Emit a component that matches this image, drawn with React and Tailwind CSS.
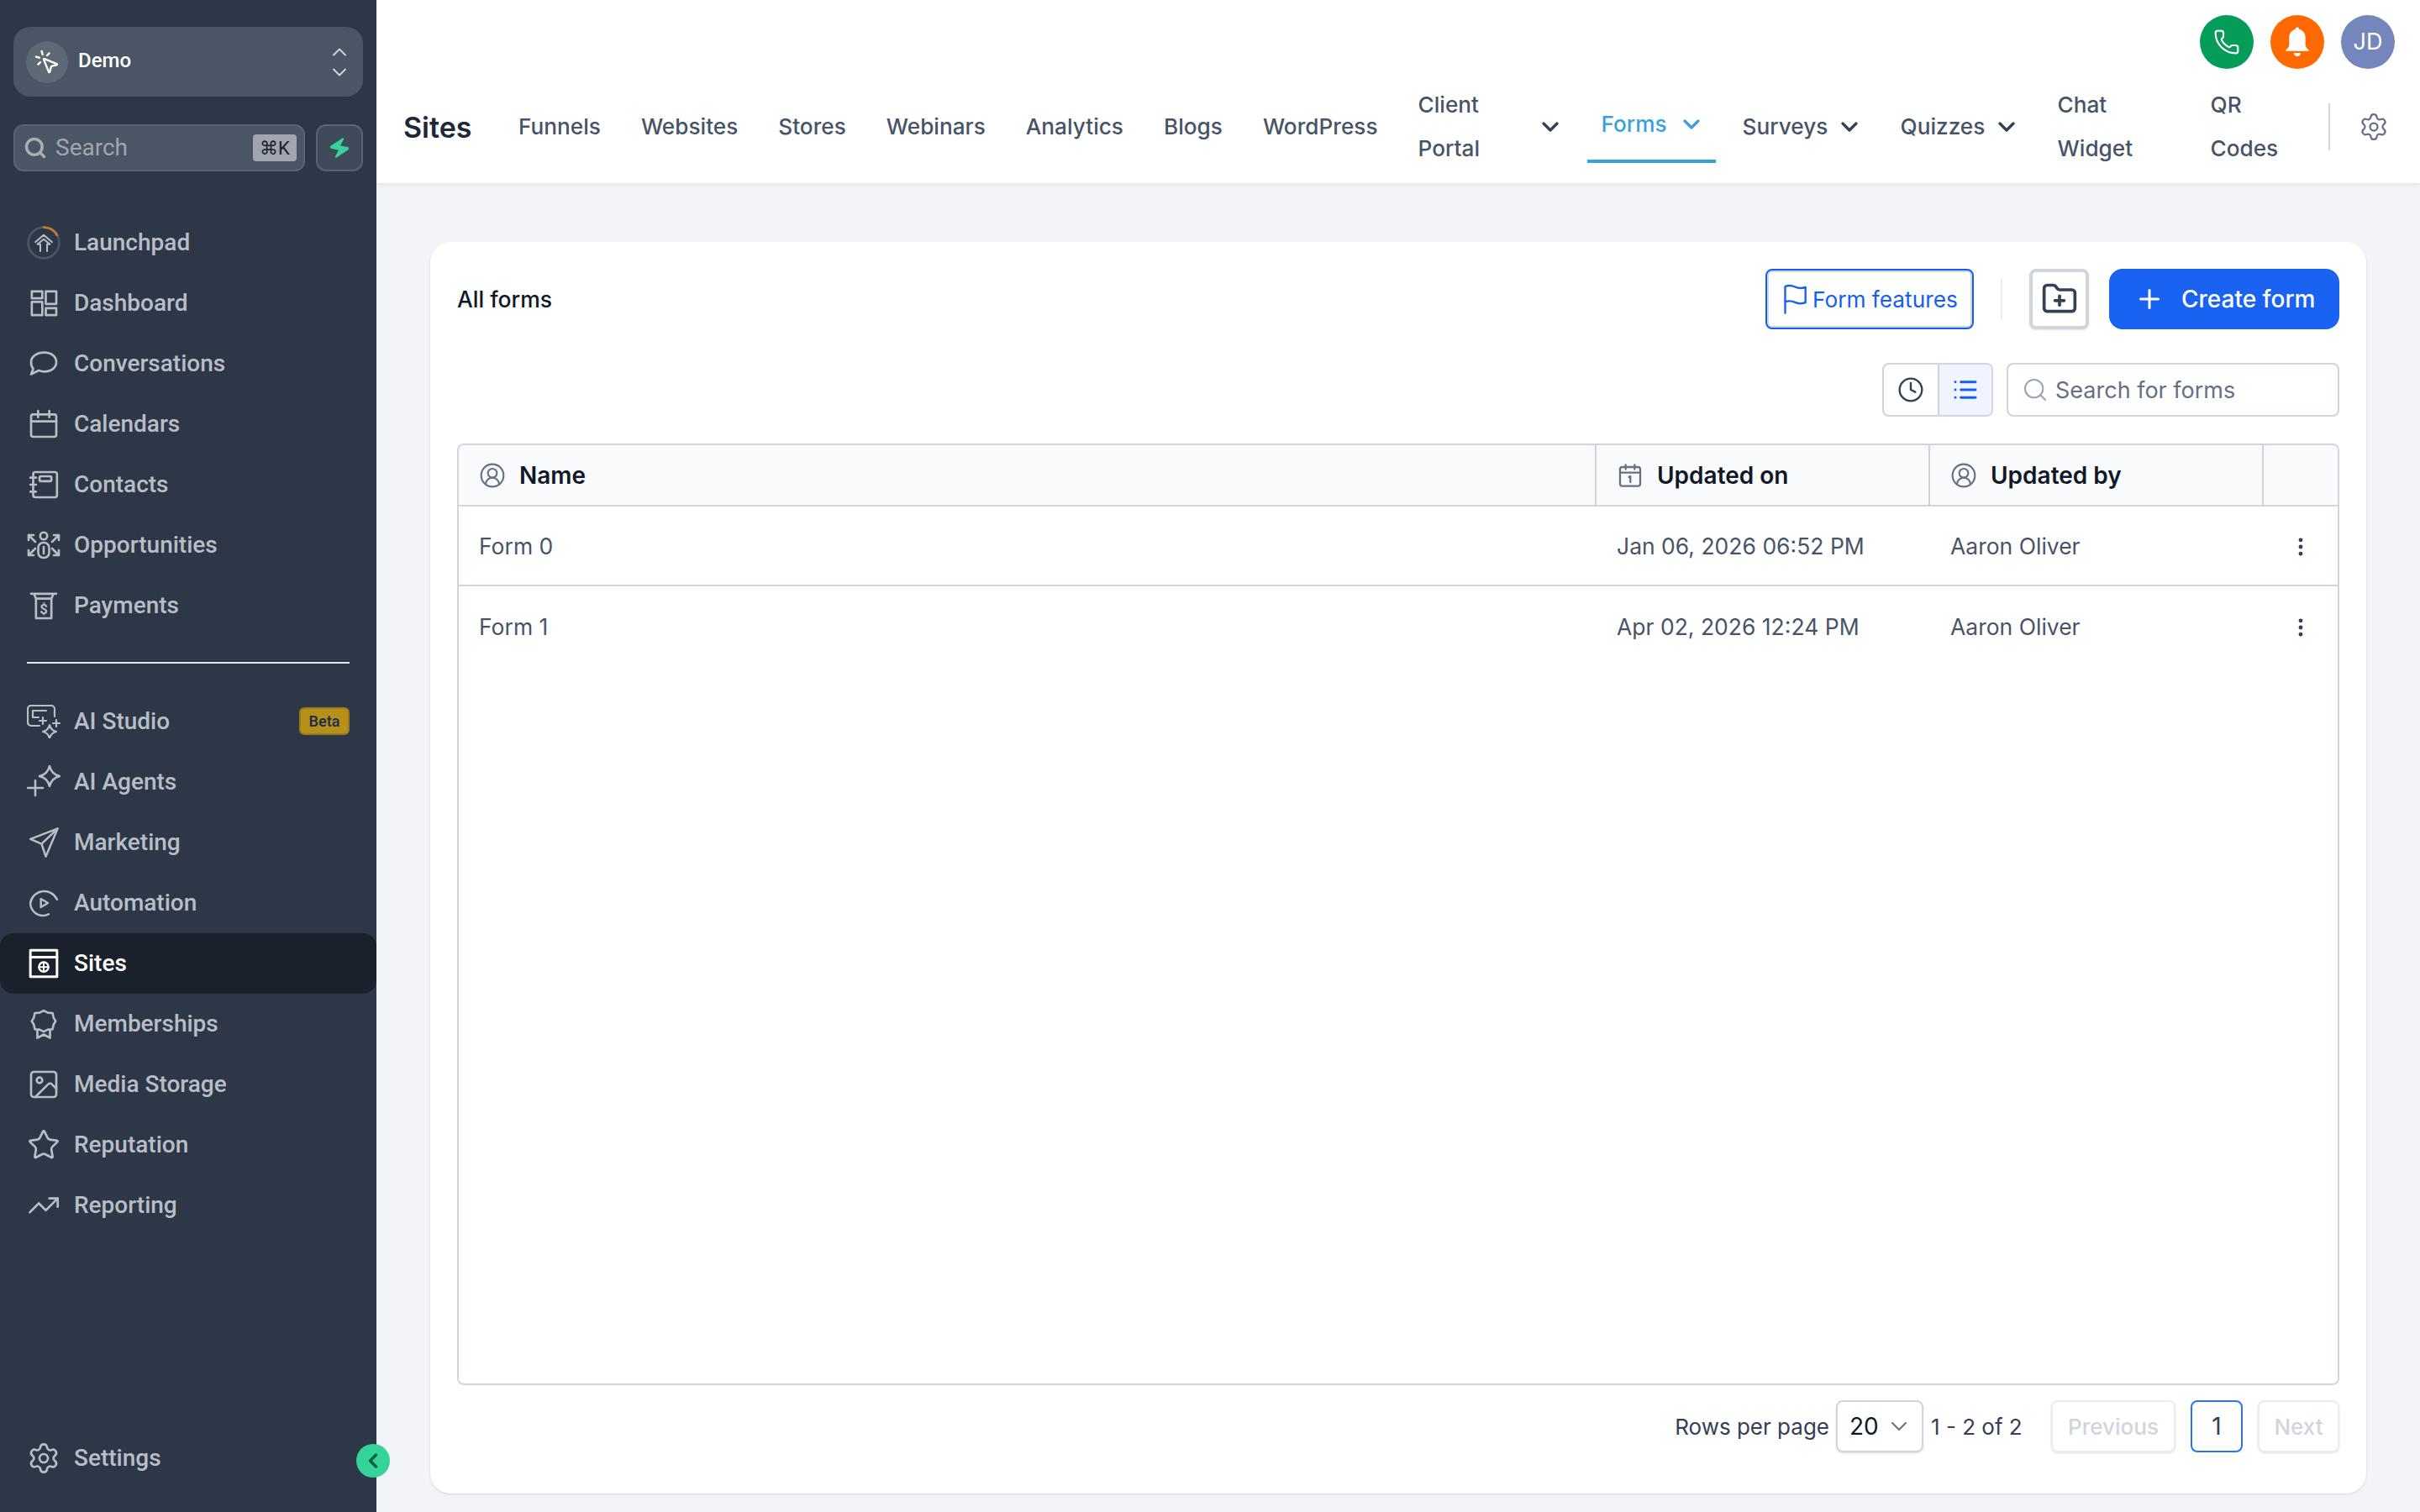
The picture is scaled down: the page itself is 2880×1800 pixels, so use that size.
import React from 'react';
import {
    ChevronDown,
    ChevronLeft,
    ChevronUp,
    CircleUserRound,
    Clock,
    EllipsisVertical,
    FolderPlus,
    Image,
    List,
    MousePointerClick,
    Phone,
    Plus,
    Search,
    Settings,
    Star,
    TrendingUp,
    Zap,
} from 'lucide-react';

// small wrapper for the hand drawn sidebar icons
const Svg = ({ children, className = 'w-10 h-10', strokeWidth = 1.6, box = 24 }) => (
    <svg
        viewBox={`0 0 ${box} ${box}`}
        fill="none"
        stroke="currentColor"
        strokeWidth={strokeWidth}
        strokeLinecap="round"
        strokeLinejoin="round"
        className={className}
    >
        {children}
    </svg>
);

const LaunchpadIcon = () => (
    <Svg>
        <circle cx="12" cy="12" r="11" stroke="#4a5565" strokeWidth="1.6" />
        <path d="M12 1a11 11 0 0 1 9.6 5.6" stroke="#c9772f" strokeWidth="1.6" />
        <path d="M6 11.5 12 6.5l6 5M9.6 18v-5H7.5L12 9.5l4.500 3.500h-2.100v5" strokeWidth="1.2" />
    </Svg>
);

const DashboardIcon = () => (
    <Svg>
        <rect x="3.5" y="3.5" width="7.5" height="5" />
        <rect x="13.5" y="3.5" width="7.5" height="9" />
        <rect x="3.5" y="11" width="7.5" height="9.5" />
        <rect x="13.5" y="15.5" width="7.5" height="5" />
    </Svg>
);

const ConversationsIcon = () => (
    <Svg>
        <path d="M12.5 4c5 0 8.5 2.900 8.5 6.800s-3.500 6.800-8.500 6.800c-1.500 0-2.900-.3-4-.8L3 19.500l1.500-3.800C3.500 14.500 3 12.800 3 10.800 3 6.900 7 4 12.500 4z" />
    </Svg>
);

const CalendarsIcon = () => (
    <Svg>
        <rect x="3" y="5" width="18" height="16" rx="1.5" />
        <path d="M3 10h18M8 2.5V7M16 2.5V7" />
    </Svg>
);

const ContactsIcon = () => (
    <Svg>
        <rect x="4.5" y="3" width="17" height="18" rx="1.5" />
        <rect x="9" y="6" width="8.5" height="3.5" rx="1" />
        <path d="M2.5 7h4M2.5 12h4M2.5 17h4" />
    </Svg>
);

const OpportunitiesIcon = () => (
    <Svg box={40} strokeWidth={2.6}>
        <circle cx="20" cy="9" r="4.200" />
        <rect x="13.500" y="17" width="13" height="18" rx="6" />
        <path d="M20 22v8" />
        <path d="M2 14V8h6M2 8l8 8M38 14V8h-6M38 8l-8 8M2 26v6h6M2 32l8-8M38 26v6h-6M38 32l-8-8" />
    </Svg>
);

const PaymentsIcon = () => (
    <Svg>
        <path d="M3 3.500h18M5 3.500 6.500 7V21h11V7L19 3.500" />
        <path d="M6.500 7h11" />
        <text x="12" y="18" fontSize="10" fontWeight="700" textAnchor="middle" fill="currentColor" stroke="none">$</text>
    </Svg>
);

const StudioIcon = () => (
    <Svg box={40} strokeWidth={2.2}>
        <path d="M15 25H5a4 4 0 0 1-4-4V5a4 4 0 0 1 4-4h24a4 4 0 0 1 4 4v9" />
        <path d="M23 7H7v8h7" />
        <path d="M19 15v8M15 19h8M35 18v8M31 22h8" />
        <path d="M27 24c1 4 3.500 7 8 8-4.500 1-7 4-8 8-1-4-3.500-7-8-8 4.500-1 7-4 8-8z" />
    </Svg>
);

const AgentsIcon = () => (
    <Svg box={40} strokeWidth={2.6}>
        <path d="M1 27h18M10 18v18" />
        <path d="M27 1c1.500 6 5 10.500 12 12-7 1.500-10.500 6-12 12-1.500-6-5-10.500-12-12 7-1.500 10.500-6 12-12z" />
    </Svg>
);

const MarketingIcon = () => (
    <Svg strokeWidth={1.5}>
        <path d="M22 2 2.500 9.500l8 3.500 3 9zM22 2 10.500 13" />
    </Svg>
);

const AutomationIcon = () => (
    <Svg strokeWidth={1.5}>
        <path d="M21.500 9.500A10 10 0 0 0 2.500 12c0 5 4 9 9 9 1.500 0 2.800-.4 4-1" />
        <path d="M10 9v6l5-3z" />
    </Svg>
);

const SitesIcon = () => (
    <Svg strokeWidth={1.8}>
        <rect x="2.500" y="2.500" width="19" height="19" />
        <path d="M2.500 7.500h19" />
        <circle cx="12" cy="14.500" r="3.400" strokeWidth="1.4" />
        <path d="M8.600 14.500h6.800M12 11.100v6.800" strokeWidth="1.2" />
    </Svg>
);

const MembershipsIcon = () => (
    <Svg>
        <path d="M12 2.500 15 4l3.300.2.700 3.200 1.500 2.600-1.500 2.600-.7 3.200L15 16l-3 1.500L9 16l-3.300-.2L5 12.600 3.500 10 5 7.400l.7-3.200L9 4z" />
        <path d="M7.500 16.500V22l4.500-2.500 4.500 2.500v-5.500" />
    </Svg>
);

const FlagIcon = () => (
    <Svg className="w-10 h-10 -ml-1" strokeWidth={1.4}>
        <path d="M4.500 22V3c2.500-1 4.500-.8 7 .3s5 1.200 7.500.2v11c-2.500 1-5 .9-7.500-.2s-4.500-1.300-7-.3" />
    </Svg>
);

const DateIcon = () => (
    <Svg className="w-8 h-8" strokeWidth={1.7}>
        <rect x="3" y="4.500" width="18" height="17" rx="2" />
        <path d="M3 9.500h18M8 2.500v4M16 2.500v4M11 13.500l1.200-.8v5.300" />
    </Svg>
);

const BellIcon = () => (
    <svg viewBox="0 0 24 24" className="w-10 h-10" fill="white">
        <path d="M12 1.500a1.300 1.300 0 0 0-1.300 1.400C7.800 3.600 6.200 6 6.200 9v5c0 1.600-1 2.600-2.200 3.500-.4.400-.2 1 .4 1h15.200c.6 0 .8-.6.4-1-1.200-.9-2.200-1.900-2.200-3.500V9c0-3-1.600-5.400-4.500-6.100A1.300 1.300 0 0 0 12 1.500z" />
        <path d="M9.600 19.800h4.800a2.400 2.400 0 0 1-4.800 0z" />
    </svg>
);

const mainNav = [
    { label: 'Launchpad', icon: <LaunchpadIcon /> },
    { label: 'Dashboard', icon: <DashboardIcon /> },
    { label: 'Conversations', icon: <ConversationsIcon /> },
    { label: 'Calendars', icon: <CalendarsIcon /> },
    { label: 'Contacts', icon: <ContactsIcon /> },
    { label: 'Opportunities', icon: <OpportunitiesIcon /> },
    { label: 'Payments', icon: <PaymentsIcon /> },
];

const toolNav = [
    { label: 'AI Studio', icon: <StudioIcon />, badge: 'Beta' },
    { label: 'AI Agents', icon: <AgentsIcon /> },
    { label: 'Marketing', icon: <MarketingIcon /> },
    { label: 'Automation', icon: <AutomationIcon /> },
    { label: 'Sites', icon: <SitesIcon />, active: true },
    { label: 'Memberships', icon: <MembershipsIcon /> },
    { label: 'Media Storage', icon: <Image className="w-10 h-10" strokeWidth={1.6} /> },
    { label: 'Reputation', icon: <Star className="w-10 h-10" strokeWidth={1.6} /> },
    { label: 'Reporting', icon: <TrendingUp className="w-10 h-10" strokeWidth={1.6} /> },
];

const NavItem = ({ item }) => (
    <div
        className={`flex items-center h-[72px] pl-8 pr-8 gap-4 rounded-2xl font-[Roboto,sans-serif] text-[28px] font-medium ${
            item.active ? 'bg-[#1a202c] text-white' : 'text-[#b9bdc5]'
        }`}
    >
        {item.icon}
        <span>{item.label}</span>
        {item.badge && (
            <span className="ml-auto -mt-0.5 w-[60px] h-[33px] flex items-center justify-center rounded-md bg-[#b7901a] border-2 border-[#9a7a1c] text-[#1f2f4a] text-[18px] font-semibold">
                {item.badge}
            </span>
        )}
    </div>
);

const Sidebar = () => (
    <aside className="relative w-[448px] shrink-0 h-full bg-[#2d3748] flex flex-col">
        <div className="mx-4 mt-8 h-[83px] rounded-[20px] bg-[#4a5565] flex items-center pl-[15px] pr-[14px]">
            <div className="w-[50px] h-[50px] rounded-full bg-[#5f6875] flex items-center justify-center text-white">
                <MousePointerClick className="w-8 h-8" strokeWidth={1.8} />
            </div>
            <span className="ml-3 text-white text-[24px] font-medium font-[Roboto,sans-serif] -mt-1">Demo</span>
            <div className="ml-auto flex flex-col text-[#d3d6db]">
                <ChevronUp className="w-7 h-7 -mb-1" strokeWidth={1.6} />
                <ChevronDown className="w-7 h-7" strokeWidth={1.6} />
            </div>
        </div>
        <div className="mx-4 mt-[33px] flex gap-[13px]">
            <div className="w-[347px] h-[56px] rounded-xl bg-[#4a5565] border-2 border-[#5b6474] flex items-center pl-[10px] pr-2 font-[Roboto,sans-serif]">
                <Search className="w-7 h-7 text-[#a8adb6]" strokeWidth={3} />
                <span className="ml-[10px] text-[28px] text-[#a0a5b0]">Search</span>
                <span className="ml-auto w-[52px] h-8 rounded bg-[#a0a5b1] text-[#1a202c] text-[22px] flex items-center justify-center">⌘K</span>
            </div>
            <div className="w-[56px] h-[56px] rounded-xl bg-[#3f4a5a] border-2 border-[#5b6474] flex items-center justify-center">
                <Zap className="w-7 h-7 text-[#34d399] fill-[#34d399] rotate-12" strokeWidth={1} />
            </div>
        </div>
        <nav className="mt-[49px]">
            {mainNav.map(item => (
                <NavItem key={item.label} item={item} />
            ))}
        </nav>
        <div className="mx-8 mt-[31px] h-0.5 bg-[#e5e7eb]" />
        <nav className="mt-[33px]">
            {toolNav.map(item => (
                <NavItem key={item.label} item={item} />
            ))}
        </nav>
        <div className="mt-auto mb-7 flex items-center h-[72px] pl-8 gap-4 text-[#b9bdc5] font-[Roboto,sans-serif] text-[28px] font-medium">
            <Settings className="w-10 h-10" strokeWidth={1.6} />
            <span>Settings</span>
        </div>
        <button className="absolute left-[424px] top-[1719px] w-10 h-10 rounded-full bg-[#34d399] flex items-center justify-center text-[#065f46]">
            <ChevronLeft className="w-7 h-7" strokeWidth={3} />
        </button>
    </aside>
);

const plainTabs = ['Funnels', 'Websites', 'Stores', 'Webinars', 'Analytics', 'Blogs', 'WordPress'];

const Header = () => (
    <header className="h-[218px] bg-white shadow-[0_2px_6px_rgba(16,24,40,0.08)] flex flex-col font-[Inter,sans-serif]">
        <div className="h-[100px] pb-9 pt-[18px] pr-[30px] flex justify-end gap-5">
            <div className="w-16 h-16 rounded-full bg-[#059b58] flex items-center justify-center text-white">
                <Phone className="w-8 h-8" strokeWidth={1.6} />
            </div>
            <div className="w-16 h-16 rounded-full bg-[#ff6900] flex items-center justify-center">
                <BellIcon />
            </div>
            <div className="w-16 h-16 rounded-full bg-[#7486bb] flex items-center justify-center text-white text-[27px]">
                JD
            </div>
        </div>
        <div className="h-[102px] flex items-center pl-8 text-[#475467] text-[26.2px] font-medium">
            <h1 className="w-[113px] shrink-0 text-[34px] font-semibold text-[#1d2939]">Sites</h1>
            {plainTabs.map(tab => (
                <div key={tab} className="px-6 shrink-0">
                    {tab}
                </div>
            ))}
            <div className="w-[222px] shrink-0 pl-6 flex items-center">
                <span className="w-[141px] leading-[52px]">Client Portal</span>
                <ChevronDown className="w-8 h-8 text-[#344054]" strokeWidth={2.5} />
            </div>
            <div className="ml-[3px] w-[153px] shrink-0 h-[94px] self-start pl-[17px] pt-[6px] flex items-center gap-[13px] border-b-4 border-[#3b9fdc] text-[#3b9fdc]">
                <span>Forms</span>
                <ChevronDown className="w-8 h-8" strokeWidth={2.5} />
            </div>
            <div className="w-[186px] shrink-0 pl-8 flex items-center gap-[10px]">
                <span>Surveys</span>
                <ChevronDown className="w-8 h-8 text-[#344054]" strokeWidth={2.5} />
            </div>
            <div className="w-[188px] shrink-0 pl-[34px] flex items-center gap-[10px]">
                <span>Quizzes</span>
                <ChevronDown className="w-8 h-8 text-[#344054]" strokeWidth={2.5} />
            </div>
            <div className="w-[215px] shrink-0 pl-[33px] leading-[52px]">
                Chat
                <br />
                Widget
            </div>
            <div className="w-[140px] shrink-0 leading-[52px]">
                QR
                <br />
                Codes
            </div>
            <div className="w-0.5 h-14 bg-[#d0d5dd] shrink-0" />
            <Settings className="w-9 h-9 ml-[34px] text-[#667085] shrink-0" strokeWidth={1.5} />
        </div>
    </header>
);

const rows = [
    { name: 'Form 0', date: 'Jan 06, 2026 06:52 PM', by: 'Aaron Oliver' },
    { name: 'Form 1', date: 'Apr 02, 2026 12:24 PM', by: 'Aaron Oliver' },
];

const FormsTable = () => (
    <div className="mt-8 flex-1 border-2 border-[#d0d5dd] rounded-lg overflow-hidden">
        <div className="h-[73px] flex bg-[#f9fafb] border-b-2 border-[#d0d5dd] text-[#101828] text-[28px] font-semibold">
            <div className="w-[1354px] flex items-center pl-6 gap-4 border-r-2 border-[#d0d5dd]">
                <CircleUserRound className="w-8 h-8 text-[#667085]" strokeWidth={1.6} />
                Name
            </div>
            <div className="w-[397px] flex items-center pl-6 gap-4 border-r-2 border-[#d0d5dd]">
                <span className="text-[#667085]"><DateIcon /></span>
                Updated on
            </div>
            <div className="w-[397px] flex items-center pl-6 gap-4 border-r-2 border-[#d0d5dd]">
                <CircleUserRound className="w-8 h-8 text-[#667085]" strokeWidth={1.6} />
                Updated by
            </div>
        </div>
        {rows.map((row, i) => (
            <div
                key={row.name}
                className={`h-[95px] flex items-center pt-[2px] text-[#475467] text-[26.5px] ${i === 0 ? 'border-b-2 border-[#d0d5dd]' : ''}`}
            >
                <div className="w-[1354px] pl-6">{row.name}</div>
                <div className="w-[397px] pl-6">{row.date}</div>
                <div className="w-[397px] pl-6">{row.by}</div>
                <div className="flex-1 flex justify-center text-[#344054]">
                    <EllipsisVertical className="w-7 h-7" strokeWidth={2.2} />
                </div>
            </div>
        ))}
    </div>
);

const Pagination = () => (
    <div className="h-[129px] shrink-0 pt-[18px] flex justify-end items-start text-[#344054] text-[26px]">
        <span className="h-[62px] flex items-center">Rows per page</span>
        <div className="ml-2 w-[104px] h-[62px] rounded-lg border-2 border-[#d0d5dd] flex items-center pl-[14px] gap-2 text-[#101828] text-[28px] shadow-sm">
            <span>20</span>
            <ChevronDown className="w-8 h-8 text-[#667085]" strokeWidth={1.5} />
        </div>
        <span className="ml-[9px] w-[110px] h-[62px] flex items-center whitespace-nowrap">1 - 2 of 2</span>
        <div className="ml-[33px] w-[148px] h-[62px] rounded-lg border-2 border-[#eaecf0] text-[#d0d5dd] font-medium flex items-center justify-center shadow-sm">
            Previous
        </div>
        <div className="ml-[18px] w-[62px] h-[62px] rounded-lg border-2 border-[#2970ff] text-[28px] flex items-center justify-center">
            1
        </div>
        <div className="ml-[18px] w-[97px] h-[62px] rounded-lg border-2 border-[#eaecf0] text-[#d0d5dd] font-medium flex items-center justify-center shadow-sm">
            Next
        </div>
    </div>
);

const FormsCard = () => (
    <section className="h-[1490px] mt-[70px] ml-[64px] mr-[64px] bg-white rounded-3xl shadow-sm px-8 pt-8 flex flex-col font-[Inter,sans-serif]">
        <div className="h-[72px] flex items-center">
            <h2 className="pt-[2px] text-[26.5px] font-medium text-[#101828]">All forms</h2>
            <div className="ml-auto h-[72px] w-[248px] rounded-lg border-2 border-[#155eef] ring-2 ring-inset ring-[#d0d5dd] flex items-center pl-[18px] text-[#155eef] text-[26.25px]">
                <FlagIcon />
                <span className="pt-[2px] whitespace-nowrap">Form features</span>
            </div>
            <div className="w-0.5 h-12 ml-8 bg-[#eaecf0]" />
            <div className="ml-8 w-[71px] h-[72px] rounded-lg border-4 border-[#d0d5dd] flex items-center justify-center shadow-sm text-[#344054]">
                <FolderPlus className="w-11 h-11" strokeWidth={2} />
            </div>
            <div className="ml-6 w-[274px] h-[72px] rounded-2xl bg-[#1a62f2] text-white text-[28px] font-medium flex items-center pl-[30px] gap-5">
                <Plus className="w-9 h-9" strokeWidth={2} />
                <span className="whitespace-nowrap">Create form</span>
            </div>
        </div>
        <div className="mt-10 h-16 flex justify-end gap-4">
            <div className="w-[132px] rounded-lg border-2 border-[#d0d5dd] flex overflow-hidden">
                <div className="flex-1 flex items-center justify-center border-r-2 border-[#d0d5dd] text-[#344054]">
                    <Clock className="w-8 h-8" strokeWidth={1.8} />
                </div>
                <div className="w-[62px] bg-[#eff4ff] flex items-center justify-center text-[#155eef]">
                    <List className="w-8 h-8" strokeWidth={2.2} />
                </div>
            </div>
            <div className="w-[396px] rounded-lg border-2 border-[#d0d5dd] flex items-center pl-4 gap-2 text-[#667085] text-[27px]">
                <Search className="w-8 h-8 text-[#98a2b3]" strokeWidth={1.5} />
                <span className="pt-[3px]">Search for forms</span>
            </div>
        </div>
        <FormsTable />
        <Pagination />
    </section>
);

export default function App() {
    return (
        <div className="flex w-[2880px] h-[1800px] overflow-hidden bg-[#f2f4f8]">
            <Sidebar />
            <main className="flex-1 flex flex-col min-w-0">
                <Header />
                <FormsCard />
            </main>
        </div>
    );
}
